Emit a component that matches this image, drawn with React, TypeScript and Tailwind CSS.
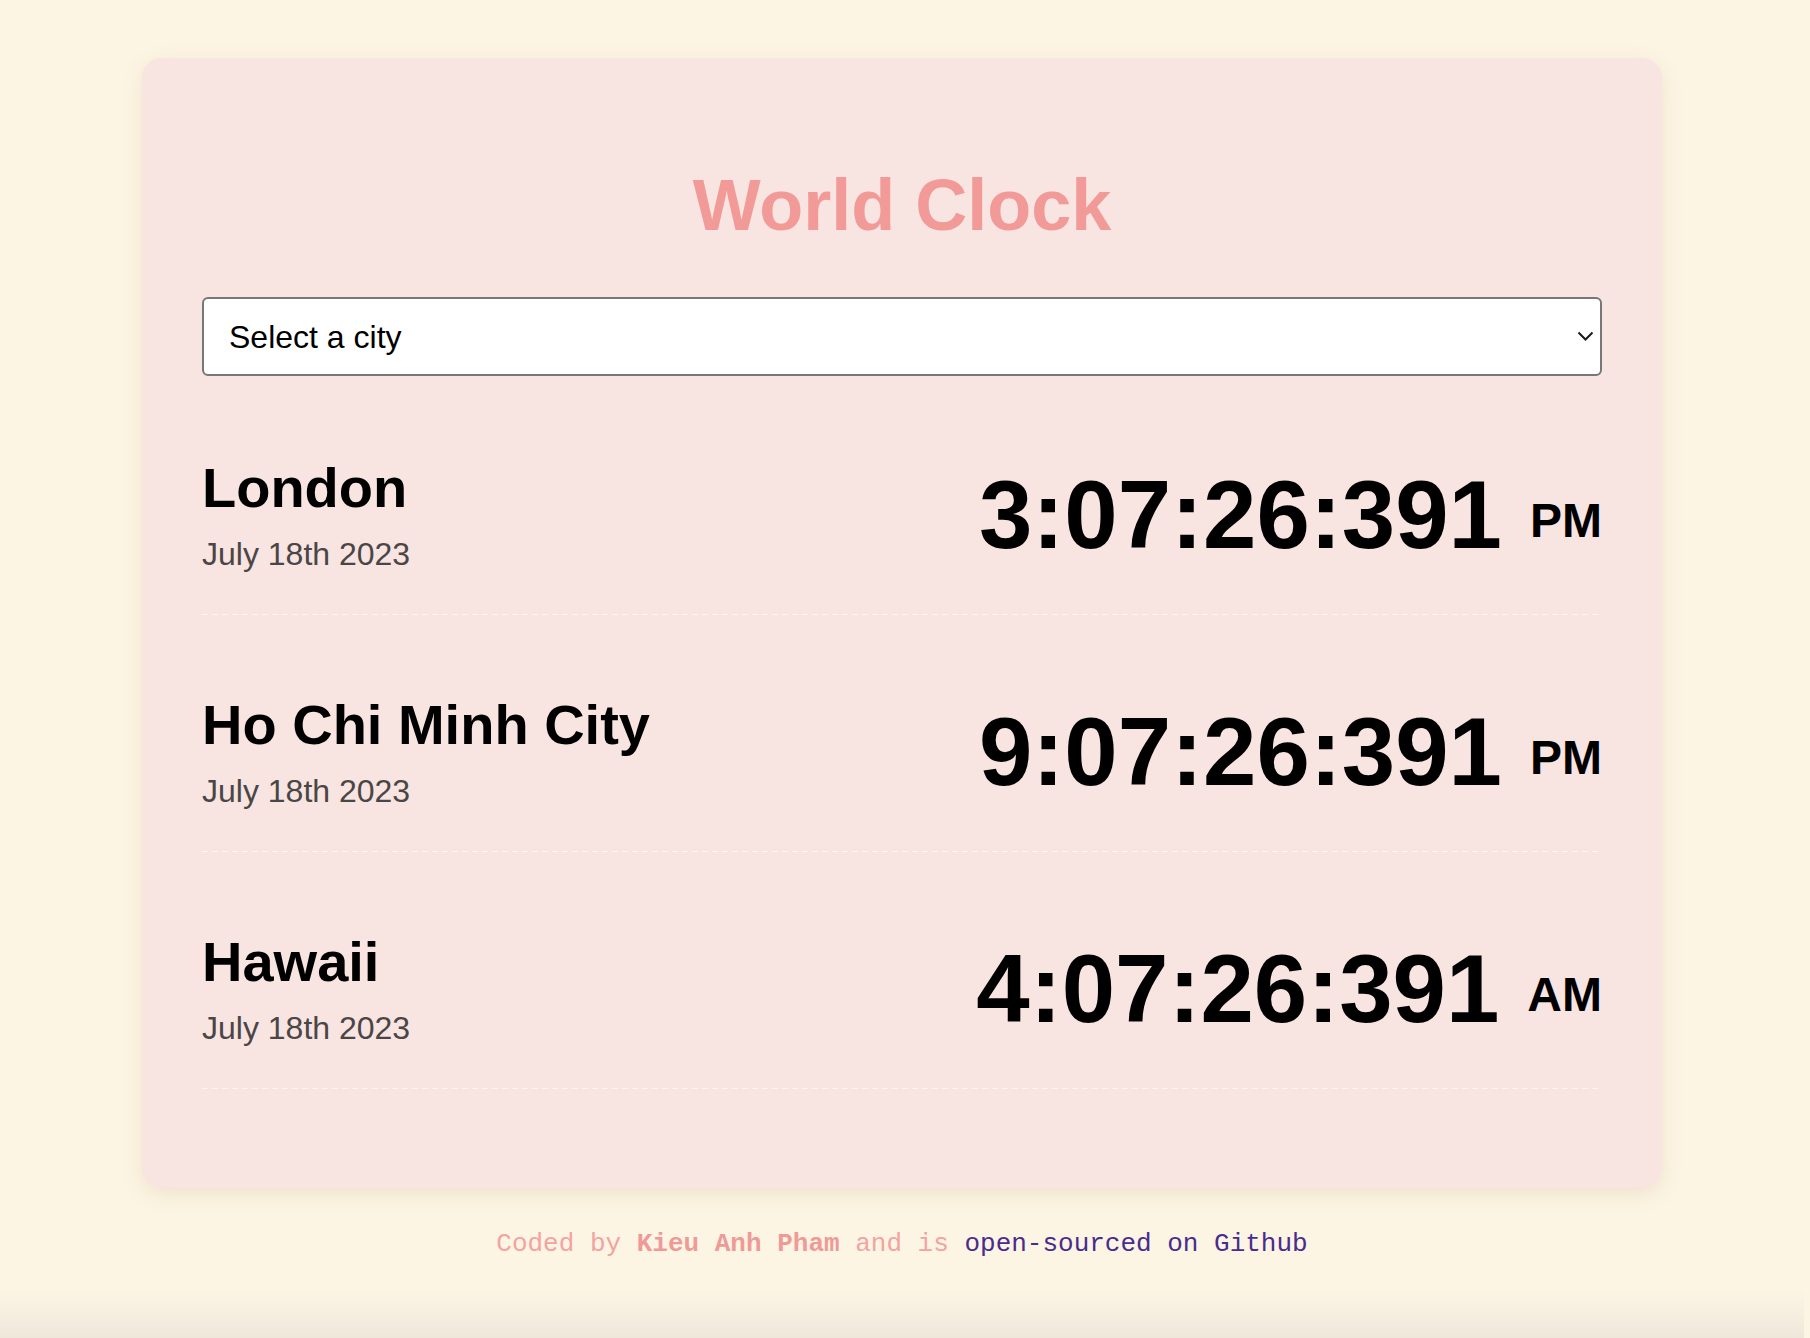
import { useState } from 'react'

type City = {
  name: string
  date: string
  time: string
  ampm: string
}

const cities: City[] = [
  { name: 'London', date: 'July 18th 2023', time: '3:07:26:391', ampm: 'PM' },
  { name: 'Ho Chi Minh City', date: 'July 18th 2023', time: '9:07:26:391', ampm: 'PM' },
  { name: 'Hawaii', date: 'July 18th 2023', time: '4:07:26:391', ampm: 'AM' },
]

function CityRow ({ city }: { city: City }) {
  return (
    <div className="flex flex-col">
      <div className="flex items-center justify-between pt-[78px] pb-[40px]">
        <div className="flex flex-col">
          <div className="text-[56px] leading-[64px] font-bold text-black">{city.name}</div>
          <div className="text-[32px] leading-[40px] mt-[14px] text-[#4b4646]">{city.date}</div>
        </div>
        <div className="flex items-end">
          <span className="text-[96px] leading-[96px] font-bold text-black">{city.time}</span>
          <span className="text-[48px] leading-[85px] font-bold text-black ml-7">{city.ampm}</span>
        </div>
      </div>
      {/* dashed divider */}
      <div className="h-px bg-[repeating-linear-gradient(to_right,#fff6e6_0px,#fff6e6_6px,transparent_6px,transparent_10px)]" />
    </div>
  )
}

export default function App () {
  const [city, setCity] = useState('')
  return (
    <div
      className="min-h-[1338px] flex flex-col bg-[#fdf5e4] pt-[58px] pr-[6px]"
      style={{ fontFamily: '"Liberation Sans", Arial, Helvetica, sans-serif' }}
    >
      <div className="mx-auto w-[1520px] rounded-[20px] bg-[#f8e4e1] px-[60px] pt-[60px] pb-[99px] shadow-[0_6px_22px_rgba(120,90,40,0.12)]">
        <h1 className="text-center text-[72px] leading-[86px] font-bold text-[#f19a98] mt-[44px] mb-[49px]">
          World Clock
        </h1>
        <div className="relative">
          <select
            value={city}
            onChange={(e) => { setCity(e.target.value) }}
            className="w-full h-[79px] appearance-none rounded-[6px] border-2 border-[#777] bg-white pl-[25px] text-[32px] text-black outline-none"
          >
            <option value="">Select a city</option>
            <option value="paris">Paris</option>
            <option value="tokyo">Tokyo</option>
            <option value="sydney">Sydney</option>
          </select>
          <svg
            className="absolute right-[8px] top-[34px] pointer-events-none"
            width="17"
            height="11"
            viewBox="0 0 17 11"
            fill="none"
          >
            <path d="M1.5 1.5L8.5 8.5L15.5 1.5" stroke="#1a1a1a" strokeWidth="2" />
          </svg>
        </div>
        <div className="flex flex-col pt-[2px]">
          {cities.map((c) => (
            <CityRow key={c.name} city={c} />
          ))}
        </div>
      </div>
      <div
        className="mt-[41px] text-center text-[26px] leading-[30px] text-[#f3a3a0]"
        style={{ fontFamily: '"Liberation Mono", "Courier New", monospace' }}
      >
        Coded by <span className="font-bold text-[#f09a98]">Kieu Anh Pham</span> and is{' '}
        <a href="#" className="text-[#4a2b8f]">open-sourced on Github</a>
      </div>
      <div className="flex-1" />
      <div className="h-[50px] bg-gradient-to-b from-transparent to-[#efe7da]" />
    </div>
  )
}
